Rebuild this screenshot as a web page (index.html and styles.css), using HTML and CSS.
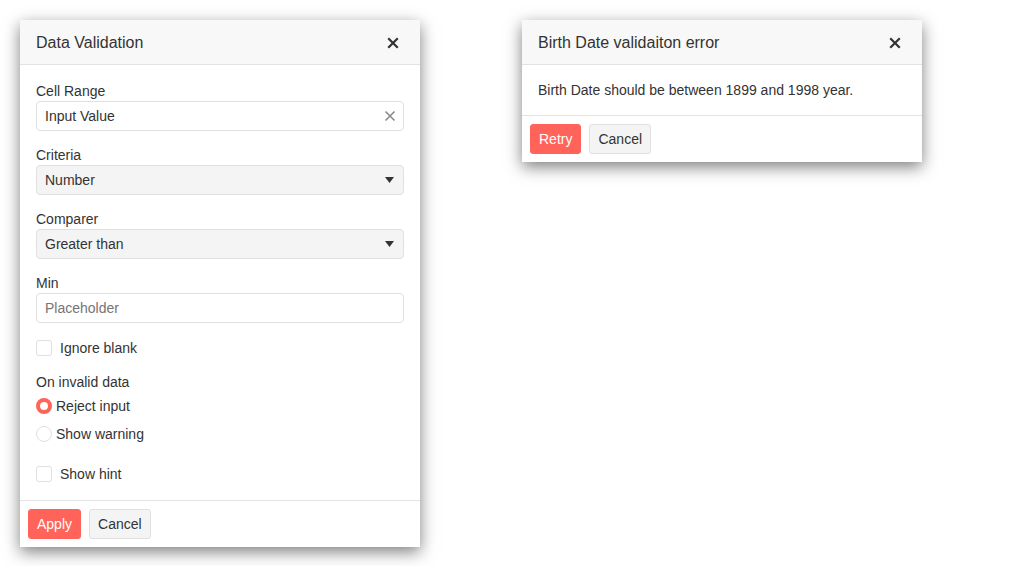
FILE: index.html
```html
<!DOCTYPE html>
<html>
<head>
<meta charset="utf-8">
<link rel="stylesheet" href="styles.css">
</head>
<body>
<div class="canvas">
  <div class="dialog">
    <div class="dlg-header">
      <span class="dlg-title">Data Validation</span>
      <span class="close"><svg width="12" height="12" viewBox="0 0 12 12"><path d="M2 2L10 10M10 2L2 10" stroke="#333" stroke-width="2.2" stroke-linecap="square"/></svg></span>
    </div>
    <div class="dlg-body">
      <div class="field">
        <label class="lbl">Cell Range</label>
        <div class="input">
          <span class="val">Input Value</span>
          <svg class="clear" width="12" height="12" viewBox="0 0 12 12"><path d="M1.5 1.5L10.5 10.5M10.5 1.5L1.5 10.5" stroke="#8a8a8a" stroke-width="1.6"/></svg>
        </div>
      </div>
      <div class="field">
        <label class="lbl">Criteria</label>
        <div class="input select">
          <span class="val">Number</span>
          <svg class="arrow" width="9" height="6" viewBox="0 0 9 6"><path d="M0 0H9L4.5 6Z" fill="#333"/></svg>
        </div>
      </div>
      <div class="field">
        <label class="lbl">Comparer</label>
        <div class="input select">
          <span class="val">Greater than</span>
          <svg class="arrow" width="9" height="6" viewBox="0 0 9 6"><path d="M0 0H9L4.5 6Z" fill="#333"/></svg>
        </div>
      </div>
      <div class="field last-field">
        <label class="lbl">Min</label>
        <div class="input">
          <span class="val placeholder">Placeholder</span>
        </div>
      </div>
      <div class="check-row first-check">
        <span class="checkbox"></span>
        <span class="check-label">Ignore blank</span>
      </div>
      <div class="group-label">On invalid data</div>
      <div class="radio-row">
        <span class="radio checked"></span>
        <span class="radio-label">Reject input</span>
      </div>
      <div class="radio-row">
        <span class="radio"></span>
        <span class="radio-label">Show warning</span>
      </div>
      <div class="check-row hint-check">
        <span class="checkbox"></span>
        <span class="check-label">Show hint</span>
      </div>
    </div>
    <div class="dlg-footer">
      <button class="btn primary">Apply</button>
      <button class="btn">Cancel</button>
    </div>
  </div>

  <div class="dialog">
    <div class="dlg-header">
      <span class="dlg-title">Birth Date validaiton error</span>
      <span class="close"><svg width="12" height="12" viewBox="0 0 12 12"><path d="M2 2L10 10M10 2L2 10" stroke="#333" stroke-width="2.2" stroke-linecap="square"/></svg></span>
    </div>
    <div class="dlg-body msg">Birth Date should be between 1899 and 1998 year.</div>
    <div class="dlg-footer">
      <button class="btn primary">Retry</button>
      <button class="btn">Cancel</button>
    </div>
  </div>
</div>
</body>
</html>
```

FILE: styles.css
```css
* { box-sizing: border-box; }
html, body {
  margin: 0;
  padding: 0;
  background: #fff;
}
body {
  font-family: "Liberation Sans", Arial, sans-serif;
  font-size: 14px;
  color: #333;
}
.canvas {
  display: flex;
  align-items: flex-start;
  gap: 102px;
  padding: 20px;
}
.dialog {
  width: 400px;
  background: #fff;
  box-shadow: 0 5px 15px rgba(0, 0, 0, 0.5);
}
.dlg-header {
  height: 45px;
  background: #f8f8f8;
  border-bottom: 1px solid #e2e2e2;
  display: flex;
  align-items: center;
  justify-content: space-between;
  padding: 2px 21px 0 16px;
}
.dlg-title {
  font-size: 16px;
  color: #333;
  line-height: 20px;
}
.close {
  display: flex;
  width: 12px;
  height: 12px;
}
.dlg-body {
  padding: 16px 16px 16px 16px;
}
.dlg-body.msg {
  line-height: 18px;
  border-bottom: 1px solid #e2e2e2;
}
.dialog .dlg-body:not(.msg) {
  border-bottom: 1px solid #e2e2e2;
}
.field {
  margin-bottom: 14px;
}
.field.last-field {
  margin-bottom: 15px;
}
.lbl {
  display: block;
  line-height: 20px;
  height: 20px;
}
.input {
  height: 30px;
  border: 1px solid #e0e0e0;
  border-radius: 4px;
  display: flex;
  align-items: center;
  padding: 0 8px;
  background: #fff;
}
.input .val {
  flex: 1;
}
.input .placeholder {
  color: #757575;
}
.input.select {
  background: #f4f4f4;
}
.clear {
  margin-right: -1px;
}
.arrow {
  margin-right: 1px;
}
.check-row {
  display: flex;
  align-items: center;
  height: 20px;
  gap: 8px;
}
.hint-check {
  margin-top: 16px;
}
.checkbox {
  width: 16px;
  height: 16px;
  border: 1px solid #e0e0e0;
  border-radius: 3px;
  background: #fff;
}
.group-label {
  margin-top: 14px;
  line-height: 20px;
}
.radio-row {
  display: flex;
  align-items: center;
  height: 28px;
  gap: 4px;
}
.radio {
  width: 16px;
  height: 16px;
  border-radius: 50%;
  border: 1px solid #e0e0e0;
  background: #fff;
}
.radio.checked {
  border: 4px solid #ff6359;
  background: #fff;
}
.dlg-footer {
  padding: 8px;
  display: flex;
  gap: 8px;
}
.btn {
  height: 30px;
  font-family: "Liberation Sans", Arial, sans-serif;
  font-size: 14px;
  color: #333;
  background: #f4f4f4;
  border: 1px solid #e0e0e0;
  border-radius: 3px;
  padding: 0 8px;
  line-height: 28px;
}
.btn.primary {
  background: #ff6359;
  border-color: #ff6359;
  color: #fff;
}
```
